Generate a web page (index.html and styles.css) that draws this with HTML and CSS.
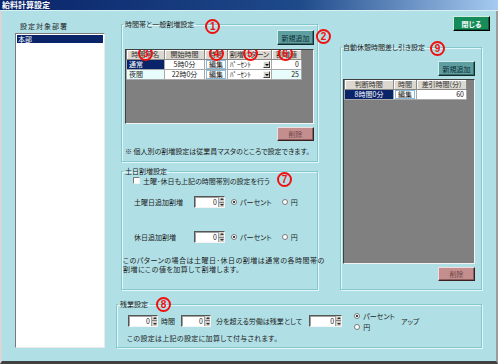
FILE: index.html
```html
<!DOCTYPE html>
<html lang="ja">
<head>
  <meta charset="UTF-8" />
  <title>給料計算設定</title>
  <link rel="stylesheet" href="styles.css">
</head>
<body>
<div class="window">
  <div class="titlebar">給料計算設定</div>

  <div class="client">

    <!-- 部署一覧 -->
    <div class="dept">
      <div class="dept-label">設定対象部署</div>
      <ul class="listbox">
        <li class="selected">本部</li>
      </ul>
    </div>

    <!-- 時間帯と一般割増設定 -->
    <fieldset class="group group-time">
      <legend>時間帯と一般割増設定<span class="mark mark-1">1</span></legend>
      <div class="toolbar">
        <button class="btn btn-add">新規追加</button>
        <span class="mark mark-2">2</span>
      </div>
      <div class="grid grid-time">
        <table>
          <colgroup>
            <col style="width:38px"><col style="width:40px"><col style="width:23px"><col style="width:44px"><col style="width:30px">
          </colgroup>
          <thead>
            <tr>
              <th>時間帯名<span class="mark mark-3">3</span></th>
              <th>開始時間</th>
              <th>時間<span class="mark mark-4">4</span></th>
              <th>割増パターン<span class="mark mark-5">5</span></th>
              <th>割増値<span class="mark mark-6">6</span></th>
            </tr>
          </thead>
          <tbody>
            <tr>
              <td class="name selected">通常</td>
              <td class="time">5時0分</td>
              <td class="edit"><span class="cell-btn">編集</span></td>
              <td class="combo"><div class="combo-box"><span>ﾊﾟｰｾﾝﾄ</span><span class="drop"></span></div></td>
              <td class="num">0</td>
            </tr>
            <tr>
              <td class="name alt">夜間</td>
              <td class="time">22時0分</td>
              <td class="edit"><span class="cell-btn">編集</span></td>
              <td class="combo"><div class="combo-box"><span>ﾊﾟｰｾﾝﾄ</span><span class="drop"></span></div></td>
              <td class="num alt">25</td>
            </tr>
          </tbody>
        </table>
      </div>
      <div class="toolbar toolbar-del">
        <button class="btn btn-del">削除</button>
      </div>
      <p class="note">※ 個人別の割増設定は従業員マスタのところで設定できます。</p>
    </fieldset>

    <!-- 閉じる / 自動休憩 -->
    <div class="right">
      <button class="btn btn-close">閉じる</button>
      <fieldset class="group group-break">
        <legend>自動休憩時間差し引き設定<span class="mark mark-9">9</span></legend>
        <div class="toolbar">
          <button class="btn btn-add">新規追加</button>
        </div>
        <div class="grid grid-break">
          <table>
            <colgroup>
              <col style="width:49px"><col style="width:23px"><col style="width:50px">
            </colgroup>
            <thead>
              <tr><th>判断時間</th><th>時間</th><th>差引時間(分)</th></tr>
            </thead>
            <tbody>
              <tr>
                <td class="time selected">8時間0分</td>
                <td class="edit"><span class="cell-btn">編集</span></td>
                <td class="num">60</td>
              </tr>
            </tbody>
          </table>
        </div>
        <div class="toolbar toolbar-del">
          <button class="btn btn-del">削除</button>
        </div>
      </fieldset>
    </div>

    <!-- 土日割増設定 -->
    <fieldset class="group group-weekend">
      <legend>土日割増設定</legend>
      <label class="check-row">
        <span class="checkbox"></span>
        <span class="check-text">土曜･休日も上記の時間帯別の設定を行う<span class="mark mark-7">7</span></span>
      </label>
      <div class="field-row field-sat">
        <span class="field-label">土曜日追加割増</span>
        <span class="spin"><span class="spin-val">0</span><span class="spin-btn"></span></span>
        <span class="radio-opt opt-pct"><span class="radio on"></span>パーセント</span>
        <span class="radio-opt opt-yen"><span class="radio"></span>円</span>
      </div>
      <div class="field-row field-hol">
        <span class="field-label">休日追加割増</span>
        <span class="spin"><span class="spin-val">0</span><span class="spin-btn"></span></span>
        <span class="radio-opt opt-pct"><span class="radio on"></span>パーセント</span>
        <span class="radio-opt opt-yen"><span class="radio"></span>円</span>
      </div>
      <p class="note note-weekend">このパターンの場合は土曜日･休日の割増は通常の各時間帯の<br>割増にこの値を加算して割増します。</p>
    </fieldset>

    <!-- 残業設定 -->
    <fieldset class="group group-overtime">
      <legend>残業設定<span class="mark mark-8">8</span></legend>
      <div class="ot-row">
        <span class="spin spin-sm"><span class="spin-val">0</span><span class="spin-btn"></span></span>
        <span class="ot-unit">時間</span>
        <span class="spin spin-sm"><span class="spin-val">0</span><span class="spin-btn"></span></span>
        <span class="ot-text">分を超える労働は残業として</span>
        <span class="spin spin-lg"><span class="spin-val">0</span><span class="spin-btn"></span></span>
        <span class="radio-stack">
          <span class="radio-opt"><span class="radio on"></span>パーセント</span>
          <span class="radio-opt"><span class="radio"></span>円</span>
        </span>
        <span class="ot-up">アップ</span>
      </div>
      <p class="note note-ot">この設定は上記の設定に加算して付与されます。</p>
    </fieldset>

  </div>
</div>
</body>
</html>
```

FILE: styles.css
```css
* {
  box-sizing: border-box;
}

body {
  margin: 0;
  font-family: "Noto Sans CJK JP", "Noto Sans", sans-serif;
  font-size: 7px;
  font-feature-settings: "palt";
  color: #1c1c1c;
}

.window {
  width: 498px;
  height: 364px;
  display: flex;
  flex-direction: column;
  background-color: #b0e0e6;
  overflow: hidden;
}

.titlebar {
  height: 11px;
  line-height: 10px;
  padding-left: 2px;
  color: white;
  font-weight: bold;
  font-size: 8px;
  background: linear-gradient(to right, #0a246a 0%, #1e4a8a 60%, #a6caf0 100%);
  border-bottom: 1px solid #d8f2f4;
}

.client {
  flex: 1;
  display: grid;
  grid-template-columns: 90px 16px 197px 22px 150px;
  grid-template-rows: auto auto auto;
  align-content: start;
  padding: 5px 0 0 13px;
  border-left: 2px solid #d6d6d6;
  border-right: 2px solid #9c9c9c;
  border-bottom: 3px solid #404040;
}

/* 部署 */
.dept {
  grid-column: 1;
  grid-row: 1 / 4;
  display: flex;
  flex-direction: column;
  margin-top: 5px;
}

.dept-label {
  height: 12px;
  padding-left: 5px;
  letter-spacing: 1px;
}

.listbox {
  flex: 1;
  margin: 0;
  padding: 1px;
  list-style: none;
  background-color: white;
  border: 1px solid;
  border-color: #7a7a7a #eaeaea #eaeaea #7a7a7a;
}

.listbox li {
  height: 8px;
  line-height: 8px;
  padding-left: 1px;
}

.listbox .selected {
  background-color: #0a246a;
  color: white;
}

/* group frames */
.group {
  margin: 0;
  padding: 0 3px;
  min-width: 0;
  border: 1px solid #86c6cd;
  box-shadow: inset 1px 1px 0 #e2f7f8, 1px 1px 0 #e2f7f8;
}

.group legend {
  position: relative;
  padding: 0 2px;
  margin-left: -2px;
  line-height: 9px;
}

.group-time {
  grid-column: 3;
  grid-row: 1;
  margin-top: 4px;
  height: 142px;
  display: flex;
  flex-direction: column;
}

.group-weekend {
  grid-column: 3;
  grid-row: 2;
  margin-top: 5px;
  height: 123px;
}

.group-overtime {
  grid-column: 3 / 6;
  grid-row: 3;
  margin: 10px 0 0 -5px;
  width: 366px;
  height: 48px;
}

.right {
  grid-column: 5;
  grid-row: 1 / 3;
  display: flex;
  flex-direction: column;
  align-items: flex-end;
}

.group-break {
  align-self: flex-start;
  width: 142px;
  flex: 1;
  margin-top: 12px;
  padding: 0 6px 0 2px;
  display: flex;
  flex-direction: column;
}

/* buttons */
.btn {
  font: inherit;
  padding: 0;
  border: 1px solid;
  cursor: pointer;
}

.btn-add {
  width: 37px;
  height: 15px;
  background-color: #5e9fa1;
  color: #0d2a30;
  border-color: #d4eeee #102c2c #102c2c #d4eeee;
  box-shadow: inset -1px -1px 0 #3c6c6e;
}

.btn-del {
  width: 37px;
  height: 14px;
  background-color: #c48e8e;
  color: #6c4646;
  border-color: #f0dede #3a2020 #3a2020 #f0dede;
  box-shadow: inset -1px -1px 0 #8a5e5e;
}

.btn-close {
  width: 37px;
  height: 15px;
  background-color: #168c5a;
  color: white;
  font-weight: bold;
  border-color: #cfeee0 #000 #000 #cfeee0;
  box-shadow: inset -1px -1px 0 #0c5a38;
}

.toolbar {
  position: relative;
  display: flex;
  justify-content: flex-end;
  margin-top: 1px;
}

.group-break .toolbar {
  margin-top: 9px;
}

.toolbar-del {
  margin-top: 3px;
}

.group-break .toolbar-del {
  margin: 3px 0 8px;
}

/* data grids */
.grid {
  background-color: #808080;
  border: 1px solid;
  border-color: #404040 #f4f4f4 #f4f4f4 #404040;
  overflow: hidden;
}

.grid-time {
  margin-top: 4px;
  height: 75px;
}

.grid-break {
  margin-top: 3px;
  flex: 1;
}

.grid table {
  border-collapse: collapse;
  table-layout: fixed;
}

.grid th {
  position: relative;
  height: 9px;
  padding: 0;
  font-weight: normal;
  line-height: 8px;
  text-align: center;
  white-space: nowrap;
  color: #333;
  background-color: #dcd8d0;
  border-right: 1px solid #8a8a8a;
  border-bottom: 1px solid #8a8a8a;
  box-shadow: inset 1px 1px 0 white;
}

.grid td {
  height: 10px;
  padding: 0 2px;
  line-height: 8px;
  white-space: nowrap;
  background-color: white;
  border: 1px solid #a8a8a8;
}

.grid td.selected {
  background-color: #0a246a;
  color: white;
}

.grid td.alt {
  background-color: #e8fcfc;
}

.grid td.time {
  text-align: center;
}

.grid td.num {
  text-align: right;
}

.grid td.edit {
  padding: 0 1px;
}

.cell-btn {
  display: block;
  height: 9px;
  line-height: 7px;
  text-align: center;
  background-color: white;
  border: 1px solid #88bcd8;
}

.grid td.combo {
  padding: 0 1px 0 2px;
}

.combo-box {
  display: flex;
  align-items: center;
  justify-content: space-between;
}

.drop {
  position: relative;
  width: 7px;
  height: 7px;
  background-color: #d4d0c8;
  border: 1px solid;
  border-color: #f4f4f4 #404040 #404040 #f4f4f4;
}

.drop::after {
  content: "";
  position: absolute;
  left: 1px;
  top: 2px;
  border-left: 2px solid transparent;
  border-right: 2px solid transparent;
  border-top: 2px solid black;
}

.note {
  margin: 6px 0 0;
  line-height: 9px;
  white-space: nowrap;
}

/* 土日割増 */
.check-row {
  display: flex;
  align-items: center;
  height: 9px;
  margin-left: 8px;
}

.checkbox {
  width: 7px;
  height: 7px;
  margin-right: 3px;
  background-color: white;
  border: 1px solid;
  border-color: #7a7a7a #f4f4f4 #f4f4f4 #7a7a7a;
}

.check-text {
  position: relative;
}

.field-row {
  display: flex;
  align-items: center;
  height: 12px;
  margin-left: 9px;
}

.field-sat {
  margin-top: 11px;
}

.field-hol {
  margin-top: 23px;
}

.field-label {
  width: 60px;
}

.spin {
  display: inline-flex;
  width: 31px;
  height: 12px;
  background-color: white;
  border: 1px solid;
  border-color: #555 #f4f4f4 #f4f4f4 #555;
  box-shadow: inset 1px 1px 0 #a0a0a0;
}

.spin-val {
  flex: 1;
  text-align: right;
  line-height: 10px;
  padding-right: 1px;
}

.spin-btn {
  position: relative;
  width: 6px;
  background: linear-gradient(#d4d0c8 0 45%, #808080 45% 55%, #d4d0c8 55% 100%);
  border-left: 1px solid #a0a0a0;
}

.spin-btn::before,
.spin-btn::after {
  content: "";
  position: absolute;
  left: 1px;
  border-left: 2px solid transparent;
  border-right: 2px solid transparent;
}

.spin-btn::before {
  top: 1px;
  border-bottom: 2px solid #333;
}

.spin-btn::after {
  bottom: 1px;
  border-top: 2px solid #333;
}

.radio-opt {
  display: inline-flex;
  align-items: center;
  gap: 3px;
  height: 8px;
}

.opt-pct {
  margin-left: 6px;
}

.opt-yen {
  margin-left: 10px;
}

.radio {
  position: relative;
  width: 6px;
  height: 6px;
  border-radius: 50%;
  background-color: white;
  border: 1px solid #7a7a7a;
}

.radio.on::after {
  content: "";
  position: absolute;
  left: 1px;
  top: 1px;
  width: 2px;
  height: 2px;
  border-radius: 50%;
  background-color: black;
}

.note-weekend {
  margin: 13px 0 0 -2px;
  letter-spacing: 0.5px;
}

/* 残業設定 */
.ot-row {
  display: flex;
  align-items: center;
  height: 20px;
  margin: 2px 0 0 8px;
}

.spin-sm {
  width: 30px;
}

.spin-lg {
  width: 33px;
  margin-left: 7px;
}

.ot-unit {
  margin: 0 6px 0 3px;
}

.ot-text {
  margin-left: 5px;
}

.radio-stack {
  display: flex;
  flex-direction: column;
  gap: 3px;
  margin-left: 12px;
}

.ot-up {
  margin-left: 6px;
}

.note-ot {
  margin: 3px 0 0 7px;
  letter-spacing: 0.3px;
}

/* 注釈番号 */
.mark {
  position: absolute;
  width: 15px;
  height: 15px;
  border: 2px solid #f01010;
  border-radius: 50%;
  color: #f01010;
  font: bold 10px/11px "Liberation Sans", sans-serif;
  text-align: center;
}

.mark-1 {
  left: calc(100% + 9px);
  top: -1px;
}

.mark-2 {
  right: -17px;
  top: -1px;
}

.grid th .mark {
  left: 50%;
  top: -4px;
  margin-left: -7px;
}

.grid th .mark-6 {
  margin-left: -9px;
}

.mark-7 {
  left: calc(100% + 7px);
  top: -4px;
}

.mark-8 {
  left: calc(100% + 6px);
  top: -3px;
}

.mark-9 {
  left: calc(100% + 3px);
  top: -2px;
}
```
